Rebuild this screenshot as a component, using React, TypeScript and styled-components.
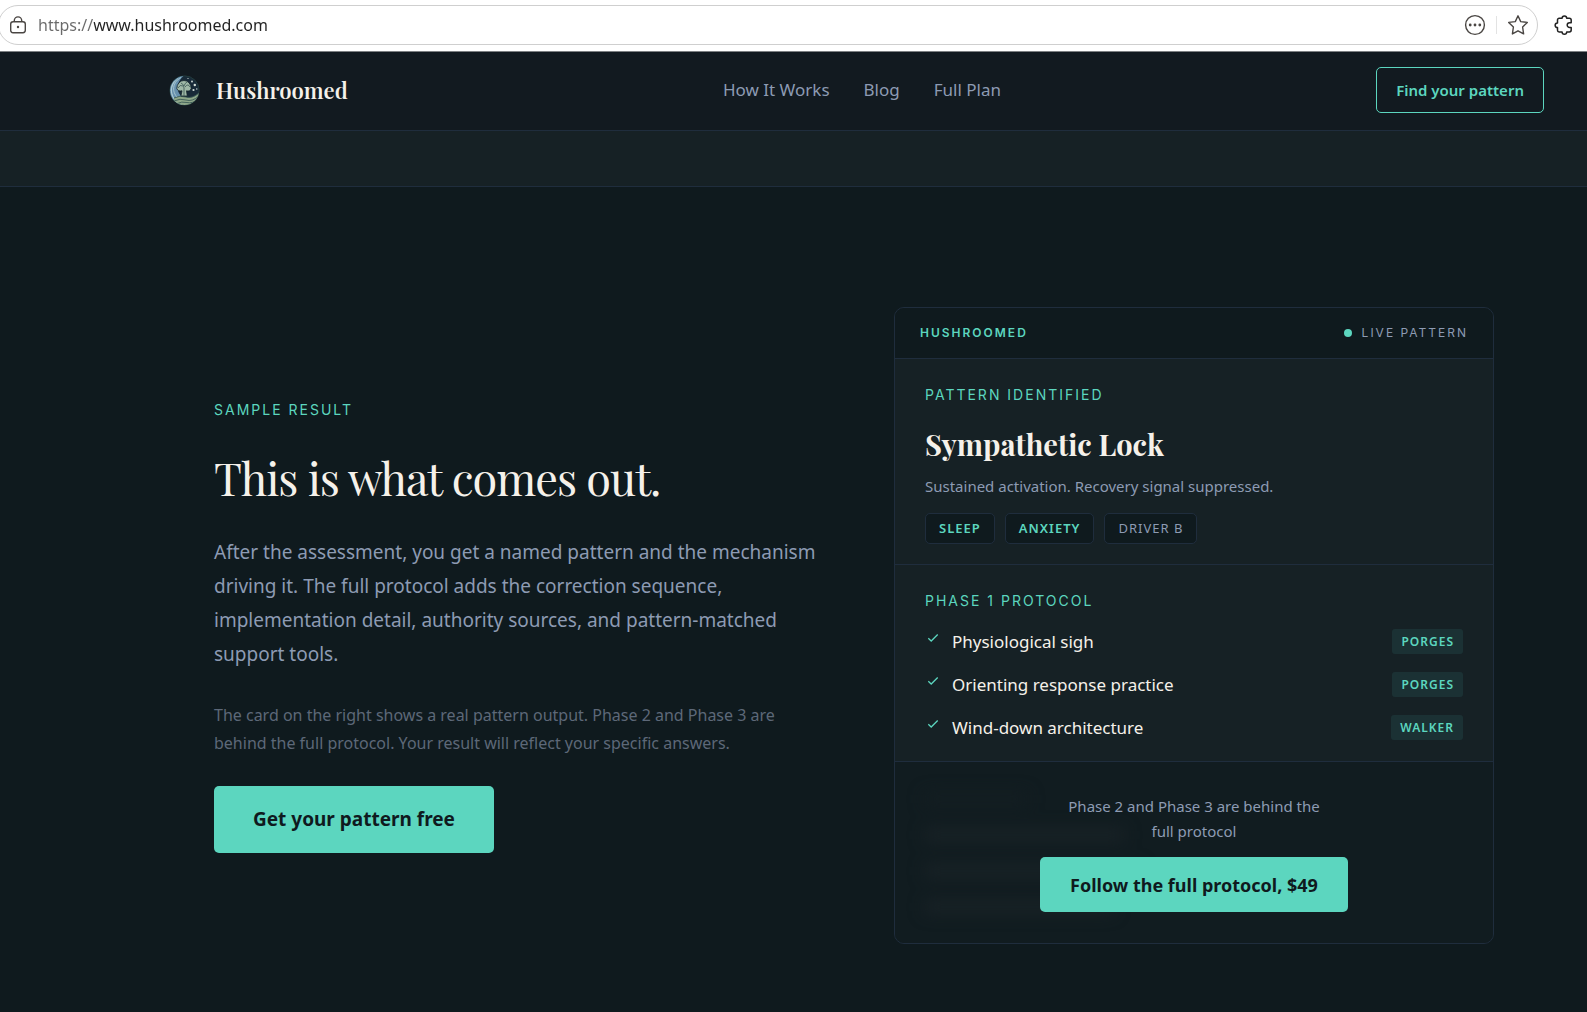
import React from "react";
import styled, { createGlobalStyle } from "styled-components";

const color = {
  page: "#0f1a1e",
  header: "#121a20",
  panel: "#162125",
  locked: "#111c20",
  line: "#1f2d3d",
  teal: "#5cd6bf",
  cream: "#f5f1ea",
  muted: "#8d9bb3",
  dim: "#5d6878",
};

const sans = `"Noto Sans", "Open Sans", sans-serif`;
const inter = `Inter, "Noto Sans", sans-serif`;
const serif = `"Playfair Display", "Liberation Serif", serif`;

const GlobalStyle = createGlobalStyle`
  *, *::before, *::after { box-sizing: border-box; }
  body {
    margin: 0;
    background: ${color.page};
    color: ${color.cream};
    font-family: ${sans};
  }
  h2, h3, p, ul { margin: 0; padding: 0; }
  button { font-family: inherit; cursor: pointer; }
`;

/* Browser bar */
const BrowserBar = styled.div`
  display: flex;
  align-items: center;
  height: 52px;
  padding: 0 12px 2px 0;
  gap: 15px;
  background: #fff;
  border-bottom: 1px solid #7d8083;
`;

const AddressPill = styled.div`
  flex: 1;
  display: flex;
  align-items: center;
  height: 40px;
  margin-left: -2px;
  padding: 0 8px 0 10px;
  border: 1px solid #cfcfcf;
  border-radius: 20px;
`;

const AddressInput = styled.input`
  flex: 1;
  min-width: 0;
  margin-left: 11px;
  padding: 0;
  border: 0;
  outline: 0;
  font: 400 16px/28px ${sans};
  color: transparent;
  caret-color: #222;
  background: linear-gradient(90deg, #6a6a6a 56px, #222 56px);
  background-clip: text;
  -webkit-background-clip: text;
`;

const IconButton = styled.button`
  display: flex;
  padding: 0;
  border: 0;
  background: none;
  color: #4a4643;
`;

const BarDivider = styled.span`
  width: 1px;
  height: 18px;
  margin: 0 10px;
  background: #e3e3e3;
`;

/* Site header */
const Header = styled.header`
  display: flex;
  align-items: center;
  justify-content: space-between;
  height: 79px;
  padding: 0 43px 2px 169px;
  background: ${color.header};
  border-bottom: 1px solid ${color.line};
`;

const Brand = styled.a`
  display: flex;
  align-items: center;
  gap: 16px;
  color: ${color.cream};
  font: 600 22px/30px ${serif};
  text-decoration: none;
`;

const Nav = styled.nav`
  display: flex;
  gap: 34px;
`;

const NavLink = styled.a`
  color: ${color.muted};
  font-size: 17px;
  line-height: 28px;
  text-decoration: none;
`;

const OutlineButton = styled.button`
  height: 46px;
  padding: 0 19px;
  border: 1px solid ${color.teal};
  border-radius: 5px;
  background: transparent;
  color: ${color.teal};
  font-size: 15px;
  font-weight: 600;
`;

const Strip = styled.div`
  height: 56px;
  background: ${color.panel};
  border-bottom: 1px solid ${color.line};
`;

/* Sample section */
const Section = styled.section`
  display: grid;
  grid-template-columns: 1fr minmax(0, 600px);
  align-items: center;
  gap: 64px;
  padding: 120px 93px 64px 214px;
`;

const Intro = styled.div`
  display: flex;
  flex-direction: column;
  align-items: flex-start;
`;

const Label = styled.p`
  color: ${color.teal};
  font: 400 14px/22px ${inter};
  letter-spacing: 2px;
  text-transform: uppercase;
`;

const Heading = styled.h2`
  margin: 28px 0 30px;
  font: 400 45px/56px ${serif};
  letter-spacing: -1px;
`;

const Lead = styled.p`
  color: ${color.muted};
  font-size: 19px;
  line-height: 34px;
`;

const Note = styled.p`
  max-width: 600px;
  margin: 30px 0 29px;
  color: ${color.dim};
  font-size: 16px;
  line-height: 28px;
`;

const SolidButton = styled.button<{ $tall?: boolean }>`
  height: ${(p) => (p.$tall ? 67 : 55)}px;
  padding: 0 ${(p) => (p.$tall ? 39 : 30)}px;
  border: 0;
  border-radius: 5px;
  background: ${color.teal};
  color: ${color.page};
  font-size: ${(p) => (p.$tall ? 19 : 18)}px;
  font-weight: 700;
  white-space: nowrap;
`;

/* Result card */
const Card = styled.article`
  overflow: hidden;
  border: 1px solid ${color.line};
  border-radius: 10px;
  background: ${color.panel};
`;

const CardTop = styled.div`
  display: flex;
  align-items: center;
  justify-content: space-between;
  height: 51px;
  padding: 0 25px;
  background: ${color.page};
  border-bottom: 1px solid ${color.line};
  font: 400 12px/20px ${inter};
  letter-spacing: 2px;
  text-transform: uppercase;
`;

const CardBrand = styled.span`
  color: ${color.teal};
  font-weight: 600;
`;

const Live = styled.span`
  display: flex;
  align-items: center;
  gap: 10px;
  color: ${color.muted};
  &::before {
    content: "";
    width: 8px;
    height: 8px;
    border-radius: 50%;
    background: ${color.teal};
  }
`;

const CardBlock = styled.div`
  padding: 25px 30px 20px;
  border-bottom: 1px solid ${color.line};
`;

const PatternName = styled.h3`
  margin: 18px 0 10px;
  font: 700 29px/40px ${serif};
`;

const PatternText = styled.p`
  color: ${color.muted};
  font-size: 15px;
  line-height: 24px;
`;

const Tags = styled.div`
  display: flex;
  gap: 10px;
  margin-top: 15px;
`;

const Tag = styled.span<{ $quiet?: boolean }>`
  padding: 0 13px;
  border: 1px solid ${color.line};
  border-radius: 5px;
  background: ${color.page};
  color: ${(p) => (p.$quiet ? color.muted : color.teal)};
  font-size: 13px;
  font-weight: ${(p) => (p.$quiet ? 400 : 600)};
  line-height: 29px;
  letter-spacing: 1px;
`;

const Steps = styled.ul`
  display: grid;
  gap: 18px;
  margin-top: 17px;
  padding-bottom: 1px;
  list-style: none;
`;

const Step = styled.li`
  display: flex;
  align-items: center;
  height: 25px;
  font-size: 17px;
  svg { margin: 0 13px 8px 2px; }
`;

const Source = styled.span`
  margin-left: auto;
  padding: 0 9px;
  border-radius: 3px;
  background: #1b3134;
  color: ${color.teal};
  font-size: 12px;
  font-weight: 600;
  line-height: 25px;
  letter-spacing: 1px;
`;

const LockedBlock = styled.div`
  display: grid;
  height: 181px;
  background: ${color.locked};
  > * { grid-area: 1 / 1; }
`;

const HiddenLines = styled.div`
  display: grid;
  align-content: start;
  gap: 24px;
  padding: 31px 30px;
  filter: blur(8px);
`;

const HiddenLine = styled.span<{ $width: number; $faint?: boolean }>`
  width: ${(p) => p.$width}%;
  height: 12px;
  background: ${(p) => (p.$faint ? "#141e22" : "#1a2327")};
`;

const Unlock = styled.div`
  z-index: 1;
  display: flex;
  flex-direction: column;
  align-items: center;
  justify-content: center;
  gap: 13px;
`;

const UnlockText = styled.p`
  max-width: 268px;
  color: ${color.muted};
  font-size: 15px;
  line-height: 25px;
  text-align: center;
`;

const Lock = () => (
  <svg width="18" height="18" viewBox="0 0 18 18" fill="none" stroke="#4a4643" strokeWidth="1.4">
    <rect x="1.7" y="5.7" width="14.6" height="11" rx="2.4" />
    <path d="M5.3 5.5V4.6a3.7 3.7 0 0 1 7.4 0v.9" />
    <circle cx="9" cy="11" r="1.2" fill="#4a4643" stroke="none" />
  </svg>
);

const More = () => (
  <svg width="22" height="22" viewBox="0 0 22 22" fill="none" stroke="currentColor" strokeWidth="1.4">
    <circle cx="11" cy="11" r="9.4" />
    <g fill="currentColor" stroke="none">
      <circle cx="6.2" cy="11" r="1.4" />
      <circle cx="11" cy="11" r="1.4" />
      <circle cx="15.8" cy="11" r="1.4" />
    </g>
  </svg>
);

const Star = () => (
  <svg width="22" height="22" viewBox="0 0 22 22" fill="none" stroke="currentColor" strokeWidth="1.4" strokeLinejoin="round">
    <path d="M11 1.8 13.7 7.6 20.3 8.4 15.6 13 16.6 19.9 11 16.8 5.4 19.9 6.4 13 1.7 8.4 8.3 7.6Z" />
  </svg>
);

const Puzzle = () => (
  <svg width="22" height="22" viewBox="0 0 22 22" fill="none" stroke="#222" strokeWidth="1.5" strokeLinejoin="round">
    <path d="M6.200 4.200h2.900a2.300 2.300 0 0 1 4.600 0h2.600a1.900 1.900 0 0 1 1.900 1.900v2.600h-1.600a2.400 2.400 0 0 0 0 4.800h1.600v2.600a1.900 1.900 0 0 1-1.900 1.900h-2.600a2.300 2.300 0 0 1-4.600 0H6.200a1.700 1.700 0 0 1-1.700-1.700v-2.700a2.350 2.350 0 0 1 0-4.700V5.900a1.700 1.700 0 0 1 1.700-1.700Z" />
  </svg>
);

const Logo = () => (
  <svg width="31" height="31" viewBox="0 0 31 31" fill="none">
    <defs>
      <clipPath id="disc">
        <circle cx="15.5" cy="15.5" r="14.5" />
      </clipPath>
    </defs>
    <circle cx="15.5" cy="15.5" r="14.7" fill="#182a38" stroke="#26403f" strokeWidth=".8" />
    <g clipPath="url(#disc)">
      <path d="M15 .5A15 15 0 0 0 1 20q1 8 11 11l6-7C8 22 4.500 9 15 .5Z" fill="#6690ad" />
      <path d="M12 2.500C2 8 2 20 13 26M9 3.500C-1 11 1 23 11 29M5.500 6c-6 8-3 17 4 23" stroke="#b4cfd4" strokeWidth=".8" />
      <path d="M5 23q6-3 12-1t13-4v13H5Z" fill="#8ea789" />
      <path d="M5 23q6-3 12-1t13-4M5 26q6-3 12-1t13-4M7 29q6-3 11-1.500t13-4" stroke="#3b5a56" strokeWidth=".9" />
      <path d="M7.800 13.500a7.200 8 0 0 1 14.400 0q-1.200 3.500-4.700 2.300l.8 5.200h-6.400l1.100-5.200q-4 1-5.200-2.300Z" fill="#9fb8a6" stroke="#14232b" strokeWidth=".8" />
      <path d="M9 13q2-4 5-2M12 8q3 1 3 5V21M21 12q-2-4-5 0M18 7q-2 1-3 4" stroke="#3a5653" strokeWidth=".8" />
      <g fill="#d5dfd9">
        <circle cx="23" cy="6.500" r=".9" />
        <circle cx="25.800" cy="10" r="1.200" />
        <circle cx="24.500" cy="15" r="1.100" />
        <circle cx="27.800" cy="14" r=".7" />
        <circle cx="19" cy="3.500" r=".6" />
      </g>
    </g>
  </svg>
);

const Check = () => (
  <svg width="12" height="10" viewBox="0 0 12 10" fill="none" stroke={color.teal} strokeWidth="1.3">
    <path d="M1.300 5.300 4.200 8 10.700 1.500" />
  </svg>
);

const steps = [
  { name: "Physiological sigh", source: "PORGES" },
  { name: "Orienting response practice", source: "PORGES" },
  { name: "Wind-down architecture", source: "WALKER" },
];

export default function App() {
  return (
    <>
      <GlobalStyle />
      <BrowserBar>
        <AddressPill>
          <Lock />
          <AddressInput aria-label="Address" defaultValue="https://www.hushroomed.com" spellCheck={false} />
          <IconButton aria-label="More actions"><More /></IconButton>
          <BarDivider />
          <IconButton aria-label="Add to favorites"><Star /></IconButton>
        </AddressPill>
        <IconButton aria-label="Extensions"><Puzzle /></IconButton>
      </BrowserBar>

      <Header>
        <Brand href="#"><Logo />Hushroomed</Brand>
        <Nav>
          <NavLink href="#how">How It Works</NavLink>
          <NavLink href="#blog">Blog</NavLink>
          <NavLink href="#plan">Full Plan</NavLink>
        </Nav>
        <OutlineButton>Find your pattern</OutlineButton>
      </Header>
      <Strip />

      <Section>
        <Intro>
          <Label>Sample result</Label>
          <Heading>This is what comes out.</Heading>
          <Lead>
            After the assessment, you get a named pattern and the mechanism driving it. The full
            protocol adds the correction sequence, implementation detail, authority sources, and
            pattern-matched support tools.
          </Lead>
          <Note>
            The card on the right shows a real pattern output. Phase 2 and Phase 3 are behind the
            full protocol. Your result will reflect your specific answers.
          </Note>
          <SolidButton $tall>Get your pattern free</SolidButton>
        </Intro>

        <Card>
          <CardTop>
            <CardBrand>Hushroomed</CardBrand>
            <Live>Live pattern</Live>
          </CardTop>
          <CardBlock>
            <Label>Pattern identified</Label>
            <PatternName>Sympathetic Lock</PatternName>
            <PatternText>Sustained activation. Recovery signal suppressed.</PatternText>
            <Tags>
              <Tag>SLEEP</Tag>
              <Tag>ANXIETY</Tag>
              <Tag $quiet>DRIVER B</Tag>
            </Tags>
          </CardBlock>
          <CardBlock>
            <Label>Phase 1 protocol</Label>
            <Steps>
              {steps.map((s) => (
                <Step key={s.name}>
                  <Check />
                  {s.name}
                  <Source>{s.source}</Source>
                </Step>
              ))}
            </Steps>
          </CardBlock>
          <LockedBlock>
            <HiddenLines aria-hidden="true">
              <HiddenLine $width={19} $faint />
              <HiddenLine $width={37} />
              <HiddenLine $width={40} />
              <HiddenLine $width={35} />
            </HiddenLines>
            <Unlock>
              <UnlockText>Phase 2 and Phase 3 are behind the full protocol</UnlockText>
              <SolidButton>Follow the full protocol, $49</SolidButton>
            </Unlock>
          </LockedBlock>
        </Card>
      </Section>
    </>
  );
}
